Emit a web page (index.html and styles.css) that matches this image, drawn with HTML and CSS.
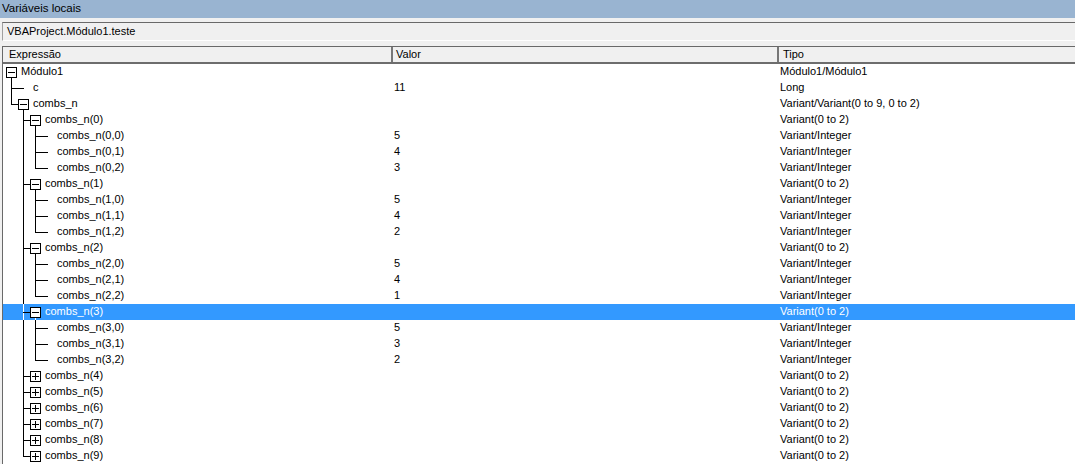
FILE: index.html
```html
<!DOCTYPE html>
<html lang="pt">
<head>
<meta charset="utf-8">
<title>Variáveis locais</title>
<link rel="stylesheet" href="styles.css">
</head>
<body>
<div class="title">Variáveis locais</div>
<div class="ctxwrap"><div class="ctx">VBAProject.Módulo1.teste</div></div>
<div class="list">
  <div class="head">
    <div class="h h1">Expressão</div>
    <div class="h h2">Valor</div>
    <div class="h h3">Tipo</div>
  </div>

  <div class="row"><div class="c1"><span class="pad0"></span><span class="box open"></span><span class="txt">Módulo1</span></div><div class="c2"></div><div class="c3">Módulo1/Módulo1</div></div>
  <div class="row"><div class="c1"><span class="pad"></span><span class="conn"></span><span class="leaf"></span><span class="txt">c</span></div><div class="c2">11</div><div class="c3">Long</div></div>
  <div class="row"><div class="c1"><span class="pad"></span><span class="conn last"></span><span class="box open"></span><span class="txt">combs_n</span></div><div class="c2"></div><div class="c3">Variant/Variant(0 to 9, 0 to 2)</div></div>

  <div class="row"><div class="c1"><span class="pad"></span><span class="g"></span><span class="conn"></span><span class="box open"></span><span class="txt">combs_n(0)</span></div><div class="c2"></div><div class="c3">Variant(0 to 2)</div></div>
  <div class="row"><div class="c1"><span class="pad"></span><span class="g"></span><span class="g v"></span><span class="conn"></span><span class="leaf"></span><span class="txt">combs_n(0,0)</span></div><div class="c2">5</div><div class="c3">Variant/Integer</div></div>
  <div class="row"><div class="c1"><span class="pad"></span><span class="g"></span><span class="g v"></span><span class="conn"></span><span class="leaf"></span><span class="txt">combs_n(0,1)</span></div><div class="c2">4</div><div class="c3">Variant/Integer</div></div>
  <div class="row"><div class="c1"><span class="pad"></span><span class="g"></span><span class="g v"></span><span class="conn last"></span><span class="leaf"></span><span class="txt">combs_n(0,2)</span></div><div class="c2">3</div><div class="c3">Variant/Integer</div></div>

  <div class="row"><div class="c1"><span class="pad"></span><span class="g"></span><span class="conn"></span><span class="box open"></span><span class="txt">combs_n(1)</span></div><div class="c2"></div><div class="c3">Variant(0 to 2)</div></div>
  <div class="row"><div class="c1"><span class="pad"></span><span class="g"></span><span class="g v"></span><span class="conn"></span><span class="leaf"></span><span class="txt">combs_n(1,0)</span></div><div class="c2">5</div><div class="c3">Variant/Integer</div></div>
  <div class="row"><div class="c1"><span class="pad"></span><span class="g"></span><span class="g v"></span><span class="conn"></span><span class="leaf"></span><span class="txt">combs_n(1,1)</span></div><div class="c2">4</div><div class="c3">Variant/Integer</div></div>
  <div class="row"><div class="c1"><span class="pad"></span><span class="g"></span><span class="g v"></span><span class="conn last"></span><span class="leaf"></span><span class="txt">combs_n(1,2)</span></div><div class="c2">2</div><div class="c3">Variant/Integer</div></div>

  <div class="row"><div class="c1"><span class="pad"></span><span class="g"></span><span class="conn"></span><span class="box open"></span><span class="txt">combs_n(2)</span></div><div class="c2"></div><div class="c3">Variant(0 to 2)</div></div>
  <div class="row"><div class="c1"><span class="pad"></span><span class="g"></span><span class="g v"></span><span class="conn"></span><span class="leaf"></span><span class="txt">combs_n(2,0)</span></div><div class="c2">5</div><div class="c3">Variant/Integer</div></div>
  <div class="row"><div class="c1"><span class="pad"></span><span class="g"></span><span class="g v"></span><span class="conn"></span><span class="leaf"></span><span class="txt">combs_n(2,1)</span></div><div class="c2">4</div><div class="c3">Variant/Integer</div></div>
  <div class="row"><div class="c1"><span class="pad"></span><span class="g"></span><span class="g v"></span><span class="conn last"></span><span class="leaf"></span><span class="txt">combs_n(2,2)</span></div><div class="c2">1</div><div class="c3">Variant/Integer</div></div>

  <div class="row sel"><div class="c1"><span class="pad"></span><span class="g"></span><span class="conn"></span><span class="box open"></span><span class="txt">combs_n(3)</span></div><div class="c2"></div><div class="c3">Variant(0 to 2)</div></div>
  <div class="row"><div class="c1"><span class="pad"></span><span class="g"></span><span class="g v"></span><span class="conn"></span><span class="leaf"></span><span class="txt">combs_n(3,0)</span></div><div class="c2">5</div><div class="c3">Variant/Integer</div></div>
  <div class="row"><div class="c1"><span class="pad"></span><span class="g"></span><span class="g v"></span><span class="conn"></span><span class="leaf"></span><span class="txt">combs_n(3,1)</span></div><div class="c2">3</div><div class="c3">Variant/Integer</div></div>
  <div class="row"><div class="c1"><span class="pad"></span><span class="g"></span><span class="g v"></span><span class="conn last"></span><span class="leaf"></span><span class="txt">combs_n(3,2)</span></div><div class="c2">2</div><div class="c3">Variant/Integer</div></div>

  <div class="row"><div class="c1"><span class="pad"></span><span class="g"></span><span class="conn"></span><span class="box plus"></span><span class="txt">combs_n(4)</span></div><div class="c2"></div><div class="c3">Variant(0 to 2)</div></div>
  <div class="row"><div class="c1"><span class="pad"></span><span class="g"></span><span class="conn"></span><span class="box plus"></span><span class="txt">combs_n(5)</span></div><div class="c2"></div><div class="c3">Variant(0 to 2)</div></div>
  <div class="row"><div class="c1"><span class="pad"></span><span class="g"></span><span class="conn"></span><span class="box plus"></span><span class="txt">combs_n(6)</span></div><div class="c2"></div><div class="c3">Variant(0 to 2)</div></div>
  <div class="row"><div class="c1"><span class="pad"></span><span class="g"></span><span class="conn"></span><span class="box plus"></span><span class="txt">combs_n(7)</span></div><div class="c2"></div><div class="c3">Variant(0 to 2)</div></div>
  <div class="row"><div class="c1"><span class="pad"></span><span class="g"></span><span class="conn"></span><span class="box plus"></span><span class="txt">combs_n(8)</span></div><div class="c2"></div><div class="c3">Variant(0 to 2)</div></div>
  <div class="row"><div class="c1"><span class="pad"></span><span class="g"></span><span class="conn last"></span><span class="box plus"></span><span class="txt">combs_n(9)</span></div><div class="c2"></div><div class="c3">Variant(0 to 2)</div></div>
</div>
</body>
</html>
```

FILE: styles.css
```css
html, body {
  margin: 0;
  padding: 0;
  background: #f0f0f0;
  overflow: hidden;
}
body {
  font-family: "Liberation Sans", Arial, sans-serif;
  font-size: 11px;
  color: #000;
  width: 1075px;
  height: 464px;
}
.title {
  height: 18px;
  line-height: 17px;
  background: #99b4d1;
  padding-left: 2px;
  font-size: 11.5px;
  color: #000;
}
.ctxwrap {
  padding: 4px 0 0 2px;
}
.ctx {
  height: 17px;
  line-height: 16px;
  border-top: 1px solid #696969;
  border-left: 1px solid #a0a0a0;
  border-bottom: 1px solid #ffffff;
  padding-left: 4px;
  background: #f0f0f0;
}
.list {
  margin-top: 5px;
  margin-left: 2px;
  border-left: 1px solid #696969;
  background: #fff;
}
.head {
  display: grid;
  grid-template-columns: 390px 386px 1fr;
  height: 15px;
  line-height: 15px;
  background: #f0f0f0;
  border-top: 1px solid #696969;
  border-bottom: 2px solid #6d6d6d;
}
.h {
  padding-left: 3px;
  white-space: nowrap;
  overflow: hidden;
}
.h1 { padding-left: 6px; border-right: 2px solid #777; }
.h2 { padding-left: 3px; border-right: 2px solid #777; }
.h3 { padding-left: 4px; }

.row {
  display: grid;
  grid-template-columns: 390px 386px 1fr;
  height: 16px;
  line-height: 15px;
  background: #fff;
}
.row.sel {
  background: #3399ff;
  color: #fff;
}
.c1 {
  display: flex;
  align-items: flex-start;
  white-space: nowrap;
}
.c2, .c3 {
  padding-left: 1px;
  white-space: nowrap;
}
.pad0 { width: 3px; flex: none; }
.pad { width: 8px; flex: none; }
.g {
  width: 12px;
  height: 16px;
  flex: none;
  position: relative;
}
.g.v::before {
  content: "";
  position: absolute;
  left: 0;
  top: 0;
  width: 1px;
  height: 16px;
  background: #000;
}
.conn {
  width: 7px;
  height: 16px;
  flex: none;
  position: relative;
}
.conn::before {
  content: "";
  position: absolute;
  left: 0;
  top: 0;
  width: 1px;
  height: 16px;
  background: #000;
}
.conn.last::before { height: 9px; }
.conn::after {
  content: "";
  position: absolute;
  left: 0;
  top: 8px;
  width: 7px;
  height: 1px;
  background: #000;
}
.sel .conn::before { background: #fff; }
.leaf {
  width: 11px;
  height: 16px;
  flex: none;
  position: relative;
}
.leaf::before {
  content: "";
  position: absolute;
  left: 0;
  top: 8px;
  width: 6px;
  height: 1px;
  background: #000;
}
.box {
  width: 9px;
  height: 9px;
  margin-top: 3px;
  border: 1px solid #000;
  background: #fff;
  flex: none;
  position: relative;
}
.box::before {
  content: "";
  position: absolute;
  left: 1px;
  top: 4px;
  width: 7px;
  height: 1px;
  background: #000;
}
.box.plus::after {
  content: "";
  position: absolute;
  left: 4px;
  top: 1px;
  width: 1px;
  height: 7px;
  background: #000;
}
.box.open::after {
  content: "";
  position: absolute;
  left: 4px;
  top: 10px;
  width: 1px;
  height: 3px;
  background: #000;
}
.sel .box.open::after { background: #fff; }
.txt {
  margin-left: 4px;
}
```
